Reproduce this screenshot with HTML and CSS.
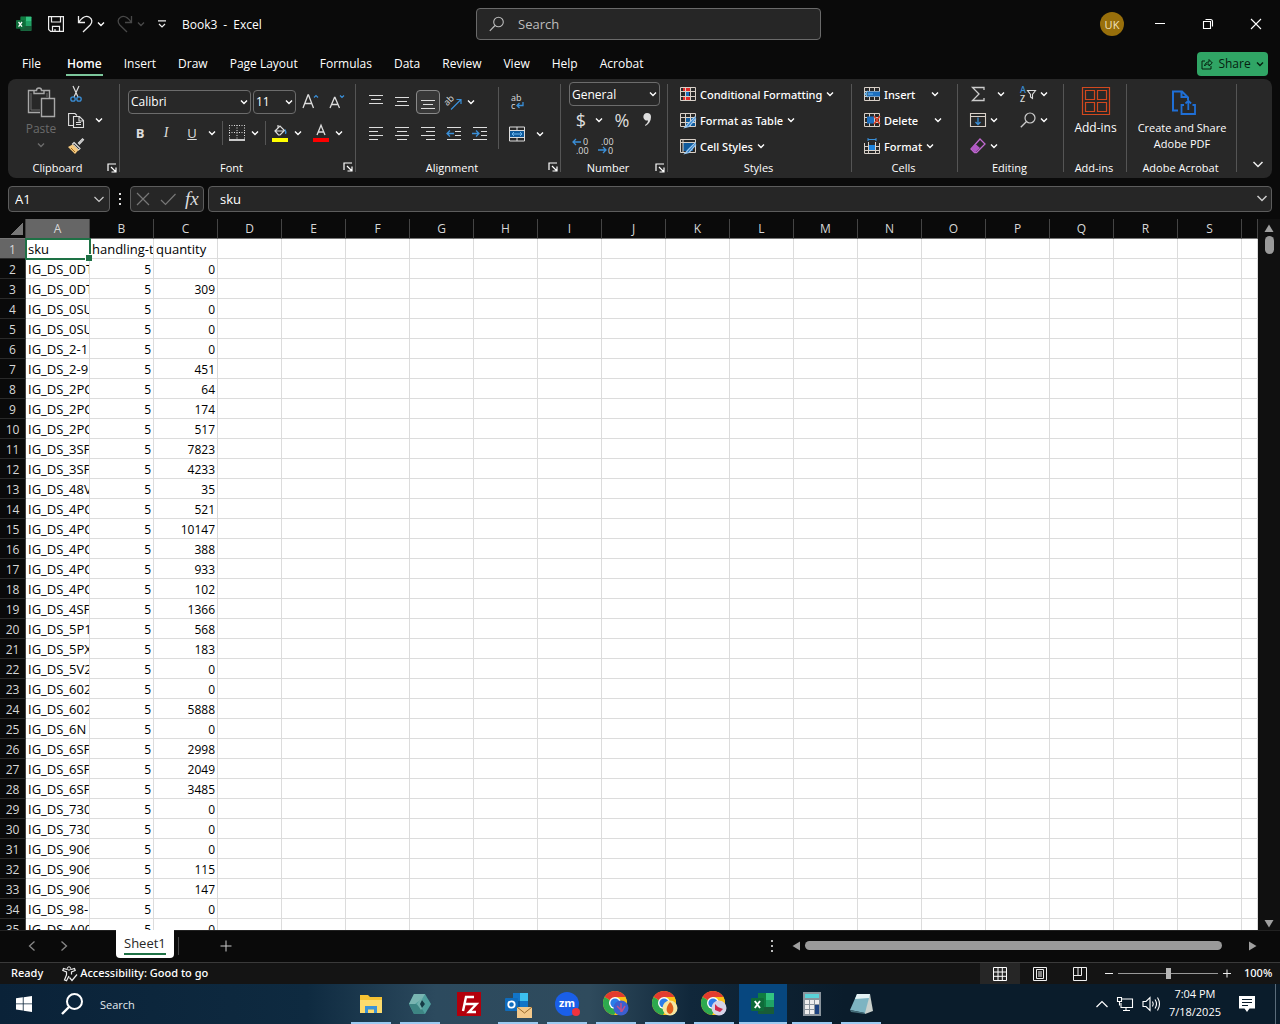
FILE: index.html
```
<!DOCTYPE html>
<html lang="en">
<head>
	<meta charset="UTF-8">
	<meta name="viewport" content="width=device-width, initial-scale=1.0">
	<title>Book3 - Excel</title>
	<link rel="stylesheet" href="styles.css">
</head>
<body>
	<svg class="defs" width="0" height="0" aria-hidden="true">
		<symbol id="chev" viewBox="0 0 8 8"><path d="M1 2.5 4 5.5 7 2.5" fill="none" stroke="currentColor" stroke-width="1.4"/></symbol>
		<symbol id="launch" viewBox="0 0 10 10"><path d="M1 8V1h8M4 4l4.5 4.5M9 4.5V9H4.5" fill="none" stroke="currentColor" stroke-width="1.2"/></symbol>
		<symbol id="excel" viewBox="0 0 24 24">
			<path d="M7 1h15a1 1 0 0 1 1 1v20H7z" fill="#21a366"/>
			<path d="M7 1h8v7H7z" fill="#107c41"/><path d="M15 1h8v7h-8z" fill="#33c481"/>
			<path d="M7 15h16v7H7z" fill="#185c37"/><path d="M15 8h8v7h-8z" fill="#21a366"/><path d="M7 8h8v7H7z" fill="#107c41"/>
			<rect x="0" y="6" width="13" height="13" rx="1" fill="#0f6b39"/>
			<path d="M3.8 9 9 16M9 9l-5.200 7" stroke="#fff" stroke-width="1.9" fill="none"/>
		</symbol>
		<symbol id="chrome" viewBox="0 0 28 28">
			<circle cx="13" cy="13" r="12" fill="#fbc116"/>
			<path d="M13 13 2.600 7A12 12 0 0 1 23.400 7z" fill="#e33b2e"/>
			<path d="M2.600 7A12 12 0 0 0 12 25l5-9z" fill="#2da94f"/>
			<path d="M13 7h10.400A12 12 0 0 1 12.500 25L18 15z" fill="#fbc116"/>
			<circle cx="13" cy="13" r="6" fill="#fff"/><circle cx="13" cy="13" r="4.600" fill="#2b7de9"/>
		</symbol>
		<symbol id="table" viewBox="0 0 16 16"><path d="M.5 1.500h15v13H.5zM.5 5.500h15M.5 10.500h15M5.500 1.500v13M10.500 1.500v13" fill="none" stroke="#d8d0c8"/></symbol>
	</svg>

	<header class="titlebar">
		<div class="quick">
			<svg class="i16" viewBox="0 0 24 24"><use href="#excel"/></svg>
			<button class="bare" aria-label="Save"><svg class="i16" viewBox="0 0 16 16"><path d="M.6.6h14.800v14.800H2.600l-2-2zM3.500.6v5.400h9V.6M4.500 15.400v-5h7v5M7 15v-2" fill="none" stroke="#eee" stroke-width="1.2"/></svg></button>
			<button class="bare undo" aria-label="Undo"><svg class="i16" viewBox="0 0 16 16"><path d="M1.500 0v6.500H8M1.800 6.200C5 1.500 9-.8 12.500 1.200c3 1.900 3 5.300.7 7.800L6 16" fill="none" stroke="#eee" stroke-width="1.3"/></svg><svg class="chev"><use href="#chev"/></svg></button>
			<button class="bare redo" aria-label="Redo" disabled><svg class="i16" viewBox="0 0 16 16"><path d="M14.500 0v6.500H8M14.200 6.200C11 1.500 7-.8 3.500 1.200.5 3.100.5 6.500 2.800 9L10 16" fill="none" stroke="currentColor" stroke-width="1.3"/></svg><svg class="chev"><use href="#chev"/></svg></button>
			<button class="bare customize" aria-label="Customize toolbar"><svg class="chev" viewBox="0 0 8 8"><path d="M0 .8h8M1 4l3 3 3-3" fill="none" stroke="#eee" stroke-width="1.2"/></svg></button>
			<span class="doc-name"><span>Book3</span><span>-</span><span>Excel</span></span>
		</div>
		<label class="searchbox">
			<svg class="i16" viewBox="0 0 16 16"><circle cx="9.500" cy="6" r="4.800" fill="none" stroke="#bbb" stroke-width="1.1"/><path d="M6 9.500.8 14.800" stroke="#bbb" stroke-width="1.2"/></svg>
			<input type="text" placeholder="Search" aria-label="Search">
		</label>
		<div class="window-buttons">
			<button class="avatar">UK</button>
			<button class="win" aria-label="Minimize"><svg class="i12" viewBox="0 0 12 12"><path d="M1 5.500h10" stroke="#fff"/></svg></button>
			<button class="win" aria-label="Restore"><svg class="i12" viewBox="0 0 12 12"><path d="M1.500 3.500h7v7h-7zM3.500 1.500h5a2 2 0 0 1 2 2v5" fill="none" stroke="#fff" stroke-width="1.1"/></svg></button>
			<button class="win" aria-label="Close"><svg class="i12" viewBox="0 0 12 12"><path d="M1 1l10 10M11 1 1 11" stroke="#fff" stroke-width="1.1"/></svg></button>
		</div>
	</header>

	<nav class="tabs">
		<a href="#" class="file">File</a>
		<a href="#" class="active">Home</a>
		<a href="#">Insert</a>
		<a href="#">Draw</a>
		<a href="#">Page Layout</a>
		<a href="#">Formulas</a>
		<a href="#">Data</a>
		<a href="#">Review</a>
		<a href="#">View</a>
		<a href="#">Help</a>
		<a href="#">Acrobat</a>
		<button class="share"><svg class="i12" viewBox="0 0 12 12"><path d="M4 3H1v8h9V8M3.500 8C4 5.500 5.500 4 8 4V1.500L11.300 5 8 8V6C6 6 4.500 6.500 3.500 8z" fill="none" stroke="currentColor"/></svg>Share<svg class="chev"><use href="#chev"/></svg></button>
	</nav>

	<section class="ribbon">
		<div class="group clipboard">
			<div class="tools">
				<button class="paste" disabled>
					<svg width="28" height="32" viewBox="0 0 28 32"><path d="M13 26.500H1.500v-22H7M17 4.500h5.500V12M7 7.500v-3h2.500a2.500 2.500 0 0 1 5 0H17v3zM14.500 12.500h13v18h-13z" fill="none" stroke="#a8a8a8" stroke-width="1.4"/><path d="M4 7v17h9M20 7v4" fill="none" stroke="#6a6a6a"/></svg>
					<span>Paste</span>
					<svg class="chev"><use href="#chev"/></svg>
				</button>
				<div class="rows">
					<div class="row"><button class="bare" aria-label="Cut"><svg class="i16" viewBox="0 0 16 16"><path d="M5 0l5 11M11 0 6 11" stroke="#ddd" fill="none" stroke-width="1.2"/><circle cx="5" cy="13" r="2.200" fill="none" stroke="#3a8fd8" stroke-width="1.3"/><circle cx="11" cy="13" r="2.200" fill="none" stroke="#3a8fd8" stroke-width="1.3"/></svg></button></div>
					<div class="row"><button class="bare copy" aria-label="Copy"><svg class="i16" viewBox="0 0 16 16"><path d="M5 13.500H.6V1.500H7l2 2M5.500 4.500h6l4 4v7h-10zM11 4.500v4.500h4.500M8 10.500h5M8 12.500h5" fill="none" stroke="#ddd" stroke-width="1.1"/></svg><svg class="chev"><use href="#chev"/></svg></button></div>
					<div class="row"><button class="bare" aria-label="Format painter"><svg class="i16" viewBox="0 0 16 16"><path d="M10 5.500 14.500.8l1 1L11 6.500M6 4.500l6 6-1.500 1.500-6-6z" fill="none" stroke="#ddd" stroke-width="1.2"/><path d="M4.500 6.500 0 9l7 7 3.500-4z" fill="#f3c77c"/><path d="M3 10l4 4" stroke="#a06a20"/></svg></button></div>
				</div>
			</div>
			<footer><span>Clipboard</span><button class="bare" aria-label="Clipboard settings"><svg class="launch"><use href="#launch"/></svg></button></footer>
		</div>

		<div class="group font">
			<div class="tools two">
				<div class="row">
					<label class="drop name"><select aria-label="Font"><option>Calibri</option></select><svg class="chev"><use href="#chev"/></svg></label>
					<label class="drop size"><select aria-label="Font size"><option>11</option></select><svg class="chev"><use href="#chev"/></svg></label>
					<button class="slot" aria-label="Grow font"><svg class="i16" viewBox="0 0 16 16"><path d="M0 14 5 1h.5l5 13M2 9.500h7" fill="none" stroke="#ddd" stroke-width="1.3"/><path d="M11 3.500 13 1.500l2 2" fill="none" stroke="#3a8fd8" stroke-width="1.200"/></svg></button>
					<button class="slot" aria-label="Shrink font"><svg class="i16" viewBox="0 0 16 16"><path d="M1 14 5.500 3.500h.5L10.500 14M3 10.500h6" fill="none" stroke="#ddd" stroke-width="1.3"/><path d="M11 1.500 13 3.500l2-2" fill="none" stroke="#3a8fd8" stroke-width="1.200"/></svg></button>
				</div>
				<div class="row style-row">
					<button class="slot"><b>B</b></button>
					<button class="slot"><i>I</i></button>
					<button class="slot"><u>U</u></button>
					<button class="more" aria-label="Underline options"><svg class="chev"><use href="#chev"/></svg></button>
					<span class="rule"></span>
					<button class="slot" aria-label="Borders"><svg class="i16" viewBox="0 0 16 16"><path d="M.5 0v14M15.500 0v14M8 0v14M0 .5h16M0 7.500h16" stroke="#ddd" stroke-dasharray="1 1.500" fill="none"/><path d="M0 15h16" stroke="#fff" stroke-width="1.500"/></svg></button>
					<button class="more" aria-label="Border options"><svg class="chev"><use href="#chev"/></svg></button>
					<span class="rule"></span>
					<button class="slot" aria-label="Fill color"><svg class="i16" viewBox="0 0 16 16"><path d="M6 0v4M3 6l5-5 4.500 4.500L8 10H6.500zM3 6h9" fill="none" stroke="#ddd" stroke-width="1.200"/><path d="M13 4.500c1 1.500 1 3 .5 4.500" stroke="#3a8fd8" fill="none" stroke-width="1.300"/><path d="M0 13h16v4H0z" fill="#ff0"/></svg></button>
					<button class="more" aria-label="Fill options"><svg class="chev"><use href="#chev"/></svg></button>
					<button class="slot" aria-label="Font color"><svg class="i16" viewBox="0 0 16 16"><path d="M4 10 8 .2 12 10M5.400 7h5.200" fill="none" stroke="#ddd" stroke-width="1.300"/><path d="M0 13h16v4H0z" fill="red"/></svg></button>
					<button class="more" aria-label="Font color options"><svg class="chev"><use href="#chev"/></svg></button>
				</div>
			</div>
			<footer><span>Font</span><button class="bare" aria-label="Font settings"><svg class="launch"><use href="#launch"/></svg></button></footer>
		</div>

		<div class="group alignment">
			<div class="tools">
				<div class="align-grid">
					<button class="slot" aria-label="Top align"><svg class="i16" viewBox="0 0 16 16"><path d="M1 1.500h14M3 5.500h10M1 9.500h14" stroke="#ddd" stroke-width="1.200"/></svg></button>
					<button class="slot" aria-label="Middle align"><svg class="i16" viewBox="0 0 16 16"><path d="M1 3.500h14M3 7.500h10M1 11.500h14" stroke="#ddd" stroke-width="1.200"/></svg></button>
					<button class="slot on" aria-label="Bottom align"><svg class="i16" viewBox="0 0 16 16"><path d="M1 6.500h14M3 10.500h10M1 14.500h14" stroke="#ddd" stroke-width="1.200"/></svg></button>
					<button class="slot" aria-label="Orientation"><svg class="i16" viewBox="0 0 16 16"><text x="-1" y="9" transform="rotate(-45 4 8)" class="tiny">ab</text><path d="M5 15.500 15 5.500M10.500 5.500H15V10" fill="none" stroke="#3a8fd8" stroke-width="1.200"/></svg></button>
					<button class="more" aria-label="Orientation options"><svg class="chev"><use href="#chev"/></svg></button>
					<button class="slot" aria-label="Align left"><svg class="i16" viewBox="0 0 16 16"><path d="M1 1.500h14M1 5.500h9M1 9.500h14M1 13.500h9" stroke="#ddd" stroke-width="1.200"/></svg></button>
					<button class="slot" aria-label="Center"><svg class="i16" viewBox="0 0 16 16"><path d="M1 1.500h14M3 5.500h10M1 9.500h14M3 13.500h10" stroke="#ddd" stroke-width="1.200"/></svg></button>
					<button class="slot" aria-label="Align right"><svg class="i16" viewBox="0 0 16 16"><path d="M1 1.500h14M6 5.500h9M1 9.500h14M6 13.500h9" stroke="#ddd" stroke-width="1.200"/></svg></button>
					<button class="slot" aria-label="Decrease indent"><svg class="i16" viewBox="0 0 16 16"><path d="M1 1.500h14M9 5.500h6M9 9.500h6M1 13.500h14" stroke="#ddd" stroke-width="1.200"/><path d="M8 7.500H1M4 4.500l-3 3 3 3" fill="none" stroke="#3a8fd8" stroke-width="1.300"/></svg></button>
					<button class="slot" aria-label="Increase indent"><svg class="i16" viewBox="0 0 16 16"><path d="M1 1.500h14M9 5.500h6M9 9.500h6M1 13.500h14" stroke="#ddd" stroke-width="1.200"/><path d="M0 7.500h7M4 4.500l3 3-3 3" fill="none" stroke="#3a8fd8" stroke-width="1.300"/></svg></button>
				</div>
				<span class="rule tall"></span>
				<div class="wrap-grid">
					<button class="slot" aria-label="Wrap text"><svg class="i16" viewBox="0 0 16 16"><text x="2" y="7" class="tiny">ab</text><text x="2" y="15" class="tiny">c</text><path d="M14 8v3.500H8M10.500 9 8 11.500l2.500 2.500" fill="none" stroke="#3a8fd8" stroke-width="1.300"/></svg></button>
					<span></span>
					<button class="slot" aria-label="Merge and center"><svg class="i16" viewBox="0 0 16 16"><path d="M1 4.500h14v7H1z" fill="#0f5a9c"/><path d="M.5 1h15v14H.5zM.5 4.500h15M.5 11.500h15M8 1v3.500M8 11.500V15" fill="none" stroke="#ddd"/><path d="M3 8h10M5 6 3 8l2 2M11 6l2 2-2 2" fill="none" stroke="#6cb8f0"/></svg></button>
					<button class="more" aria-label="Merge options"><svg class="chev"><use href="#chev"/></svg></button>
				</div>
			</div>
			<footer><span>Alignment</span><button class="bare" aria-label="Alignment settings"><svg class="launch"><use href="#launch"/></svg></button></footer>
		</div>

		<div class="group number">
			<div class="tools rows">
				<label class="drop format"><select aria-label="Number format"><option>General</option></select><svg class="chev"><use href="#chev"/></svg></label>
				<div class="row">
					<button class="slot sign">$</button>
					<button class="more" aria-label="Currency options"><svg class="chev"><use href="#chev"/></svg></button>
					<button class="slot sign">%</button>
					<button class="slot" aria-label="Comma style"><svg class="i16" viewBox="0 0 16 16"><path d="M9 1a4 4 0 0 1 4 4c0 4-2 7-5.500 9L7 13c2-1.500 3-3 3-4.500A3.800 3.800 0 1 1 9 1z" fill="#ddd"/></svg></button>
				</div>
				<div class="row">
					<button class="slot" aria-label="Increase decimal"><svg class="i16" viewBox="0 0 16 16"><text x="10" y="7" class="tiny">0</text><text x="3" y="16" class="tiny">.00</text><path d="M8 4H0M3 1 0 4l3 3" fill="none" stroke="#3a8fd8" stroke-width="1.300"/></svg></button>
					<button class="slot" aria-label="Decrease decimal"><svg class="i16" viewBox="0 0 16 16"><text x="4" y="7" class="tiny">.00</text><text x="11" y="16" class="tiny">0</text><path d="M1 12h8M6 9l3 3-3 3" fill="none" stroke="#3a8fd8" stroke-width="1.300"/></svg></button>
				</div>
			</div>
			<footer><span>Number</span><button class="bare" aria-label="Number settings"><svg class="launch"><use href="#launch"/></svg></button></footer>
		</div>

		<div class="group styles">
			<div class="tools rows">
				<div class="row"><button class="cmd"><svg class="i16" viewBox="0 0 16 16"><path d="M3 2h8v4H3zM3 10h8v4H3z" fill="#e02828"/><path d="M6 6h3v4H6z" fill="#1c6fc0"/><use href="#table"/></svg>Conditional Formatting<svg class="chev"><use href="#chev"/></svg></button></div>
				<div class="row"><button class="cmd"><svg class="i16" viewBox="0 0 16 16"><path d="M5 5h10v9H5z" fill="#0f5a9c"/><use href="#table"/><path d="M15.500 4.500 8 12l-3 3.500 4-1 7-8" fill="#1c6fc0" stroke="#9cc8ee" stroke-width="1.200"/></svg>Format as Table<svg class="chev"><use href="#chev"/></svg></button></div>
				<div class="row"><button class="cmd"><svg class="i16" viewBox="0 0 16 16"><path d="M3 5h10v8H3z" fill="#0f5a9c"/><path d="M.5 1.500h15v13H.5zM3 1.500v13M.5 4.500h15" fill="none" stroke="#d8d0c8"/><path d="M15.500 4.500 8 12l-3 3.500 4-1 7-8" fill="#1c6fc0" stroke="#9cc8ee" stroke-width="1.200"/></svg>Cell Styles<svg class="chev"><use href="#chev"/></svg></button></div>
			</div>
			<footer><span>Styles</span></footer>
		</div>

		<div class="group cells">
			<div class="tools rows">
				<div class="row"><button class="cmd wide"><svg class="i16" viewBox="0 0 16 16"><use href="#table"/><path d="M4 5.500h12v5H4z" fill="#1c6fc0"/><path d="M9 8H1M4 5 1 8l3 3" fill="none" stroke="#6cb8f0" stroke-width="1.200"/></svg>Insert<svg class="chev"><use href="#chev"/></svg></button></div>
				<div class="row"><button class="cmd wide"><svg class="i16" viewBox="0 0 16 16"><use href="#table"/><path d="M3 4.500h7v7H3z" fill="#1c6fc0"/><path d="M10 4l6 8M16 4l-6 8" stroke="#e0452c" stroke-width="1.500"/></svg>Delete<svg class="chev"><use href="#chev"/></svg></button></div>
				<div class="row"><button class="cmd"><svg class="i16" viewBox="0 0 16 16"><path d="M4 1.500h8M4 0v3M12 0v3" stroke="#3a8fd8" fill="none"/><path d="M.5 5v10.500h15V5M.5 8.500h15M.5 12.500h15M4.500 4v11.500M11.500 4v11.500" fill="none" stroke="#d8d0c8"/><path d="M5 7h6v5H5z" fill="#1c82dc"/></svg>Format<svg class="chev"><use href="#chev"/></svg></button></div>
			</div>
			<footer><span>Cells</span></footer>
		</div>

		<div class="group editing">
			<div class="tools edit-grid">
				<button class="cmd wide" aria-label="AutoSum"><svg class="i16" viewBox="0 0 16 16"><path d="M14 4V1.500H2.500L9 8l-6.500 6.500H14V12" fill="none" stroke="#ccc" stroke-width="1.300"/></svg><svg class="chev"><use href="#chev"/></svg></button>
				<button class="cmd" aria-label="Sort and filter"><svg class="i16" viewBox="0 0 16 16"><text x="0" y="7" class="tiny blue">A</text><text x="0" y="16" class="tiny">Z</text><path d="M7.500 4.500h8l-3 4v4l-2-1.500V8.500z" fill="none" stroke="#ddd" stroke-width="1.100"/></svg><svg class="chev"><use href="#chev"/></svg></button>
				<button class="cmd" aria-label="Fill"><svg class="i16" viewBox="0 0 16 16"><path d="M.5 1.500h15v13H.5zM.5 4.500h15" fill="none" stroke="#d8d0c8" stroke-width="1.100"/><path d="M8 5.500v7M5.500 10 8 12.500l2.500-2.500" fill="none" stroke="#3a8fd8" stroke-width="1.300"/></svg><svg class="chev"><use href="#chev"/></svg></button>
				<button class="cmd" aria-label="Find and select"><svg class="i16" viewBox="0 0 16 16"><circle cx="10" cy="6" r="5" fill="none" stroke="#ccc" stroke-width="1.200"/><path d="M6.500 9.500.8 15.200" stroke="#ccc" stroke-width="1.300"/></svg><svg class="chev"><use href="#chev"/></svg></button>
				<button class="cmd" aria-label="Clear"><svg class="i16" viewBox="0 0 16 16"><path d="M10 1 15 6 6.500 14.500H4.500L1 11z" fill="none" stroke="#c06ad0" stroke-width="1.300"/><path d="M5.500 6 1 10.500l4 4 5-4.500z" fill="#b058c4"/></svg><svg class="chev"><use href="#chev"/></svg></button>
			</div>
			<footer><span>Editing</span></footer>
		</div>

		<div class="group addins">
			<button class="big"><svg width="28" height="28" viewBox="0 0 28 28"><path d="M.5.5h27v27H.5zM3.500 3.500h9v9h-9zM15.500 3.500h9v9h-9zM3.500 15.500h9v9h-9zM15.500 15.500h9v9h-9z" fill="none" stroke="#d2481e" stroke-width="1.200"/></svg><span>Add-ins</span></button>
			<footer><span>Add-ins</span></footer>
		</div>

		<div class="group acrobat">
			<button class="big"><svg width="28" height="28" viewBox="0 0 28 28"><path d="M10 23.500H5V4.500h9l6 6V13M13.500 4.500V10H20" fill="none" stroke="#1f6fd6" stroke-width="2"/><path d="M16 18h-2.500v9H27v-9h-2.500M20.300 23v-9M17.500 16.500l2.800-2.800 2.800 2.800" fill="none" stroke="#1f6fd6" stroke-width="1.800"/></svg><span>Create and Share<br>Adobe PDF</span></button>
			<footer><span>Adobe Acrobat</span></footer>
		</div>
		<button class="bare collapse" aria-label="Collapse ribbon"><svg class="i12" viewBox="0 0 12 12"><path d="M1.500 4 6 8.500 10.500 4" fill="none" stroke="#eee" stroke-width="1.500"/></svg></button>
	</section>

	<div class="formula-bar">
		<label class="box name-box"><input type="text" value="A1" aria-label="Name box"><svg class="i12" viewBox="0 0 12 12"><path d="M1.500 4 6 8.500 10.500 4" fill="none" stroke="#ccc" stroke-width="1.200"/></svg></label>
		<svg class="dots" viewBox="0 0 4 14"><path d="M1 1h2v2H1zM1 6h2v2H1zM1 11h2v2H1z" fill="#ddd"/></svg>
		<div class="box fx">
			<button class="bare" aria-label="Cancel"><svg class="i16" viewBox="0 0 16 16"><path d="M2 2l12 12M14 2 2 14" stroke="#777" stroke-width="1.200"/></svg></button>
			<button class="bare" aria-label="Enter"><svg class="i16" viewBox="0 0 16 16"><path d="M1 9l4.500 4.500L15.500 3" fill="none" stroke="#777" stroke-width="1.200"/></svg></button>
			<button class="bare fn"><i>fx</i></button>
		</div>
		<label class="box formula"><input type="text" value="sku" aria-label="Formula"><svg class="i12" viewBox="0 0 12 12"><path d="M1.500 3 6 7.500 10.500 3" fill="none" stroke="#ccc" stroke-width="1.500"/></svg></label>
	</div>

	<main class="workspace">
		<div class="sheet">
			<table id="grid"></table>
		</div>
		<div class="vscroll">
			<svg class="arrow" viewBox="0 0 10 10"><path d="M5 1.500 9.500 9h-9z"/></svg>
			<div class="thumb"></div>
			<svg class="arrow" viewBox="0 0 10 10"><path d="M5 8.500.5 1h9z"/></svg>
		</div>
	</main>

	<div class="sheetbar">
		<button class="bare nav" aria-label="Previous sheet"><svg class="i12" viewBox="0 0 12 12"><path d="M8.500 1.500 3.500 6l5 4.500" fill="none" stroke="#888" stroke-width="1.300"/></svg></button>
		<button class="bare nav" aria-label="Next sheet"><svg class="i12" viewBox="0 0 12 12"><path d="M3.500 1.500 8.500 6l-5 4.500" fill="none" stroke="#888" stroke-width="1.300"/></svg></button>
		<button class="sheet-tab"><span>Sheet1</span></button>
		<button class="bare add" aria-label="New sheet"><svg class="i12" viewBox="0 0 12 12"><path d="M6 .5v11M.5 6h11" stroke="#ccc"/></svg></button>
		<svg class="dots" viewBox="0 0 4 14"><path d="M1 1h2v2H1zM1 6h2v2H1zM1 11h2v2H1z" fill="#bbb"/></svg>
		<div class="hscroll">
			<svg class="arrow" viewBox="0 0 10 10"><path d="M1.500 5 9 .5v9z"/></svg>
			<div class="track"><div class="thumb"></div></div>
			<svg class="arrow" viewBox="0 0 10 10"><path d="M8.500 5 1 .5v9z"/></svg>
		</div>
	</div>

	<footer class="statusbar">
		<span class="ready">Ready</span>
		<svg class="i16" viewBox="0 0 16 16"><circle cx="7" cy="2.500" r="1.700" fill="none" stroke="#eee"/><path d="M5 3.500 1.500 2.500.8 4.500 4.500 6v3L2.500 14l2 .8L7 10M9 3.500l3.500-1 .7 2L9.500 6v2.500M7.500 11.500l2.500 3 5-6" fill="none" stroke="#eee" stroke-width="1.200"/></svg>
		<span class="access">Accessibility: Good to go</span>
		<button class="view on" aria-label="Normal view"><svg class="i14" viewBox="0 0 14 14"><path d="M.5.5h13v13H.5zM.5 5h13M.5 9.300h13M5 .5v13M9.300.5v13" fill="none" stroke="#fff"/></svg></button>
		<button class="view" aria-label="Page layout view"><svg class="i14" viewBox="0 0 14 14"><path d="M.5.5h13v13H.5zM3.500 2.500h7v9h-7zM5 5h4M5 7h4M5 9h4" fill="none" stroke="#eee"/></svg></button>
		<button class="view" aria-label="Page break view"><svg class="i14" viewBox="0 0 14 14"><path d="M.5.5h13v13H.5zM.5 8.500h8v-8M5 .5v8" fill="none" stroke="#eee"/></svg></button>
		<button class="bare step" aria-label="Zoom out"><svg class="i10" viewBox="0 0 10 10"><path d="M1 4.500h8" stroke="#eee"/></svg></button>
		<input type="range" class="zoom" min="0" max="100" value="50" aria-label="Zoom">
		<button class="bare step" aria-label="Zoom in"><svg class="i10" viewBox="0 0 10 10"><path d="M1 4.500h8M5 .5v8" stroke="#eee"/></svg></button>
		<span class="percent">100%</span>
	</footer>

	<div class="taskbar">
		<button class="start" aria-label="Start"><svg class="i16" viewBox="0 0 16 16"><path d="M0 2.300 6.800 1.300v6.200H0zM7.600 1.200 16 0v7.500H7.600zM0 8.300h6.800v6.300L0 13.600zM7.600 8.300H16V16l-8.400-1.200z" fill="#fff"/></svg></button>
		<button class="find"><svg width="24" height="24" viewBox="0 0 24 24"><circle cx="14.500" cy="9.500" r="7.500" fill="none" stroke="#fff" stroke-width="2"/><path d="M9 15 2 22" stroke="#fff" stroke-width="2.400"/></svg>Search</button>
		<div class="apps">
			<button class="app open" aria-label="File Explorer"><svg width="24" height="24" viewBox="0 0 24 24"><path d="M1 3h8l2 2h12v16H1z" fill="#f5c233"/><path d="M1 8h22v13H1z" fill="#fddb6d"/><path d="M6 14h12v7h-3v-3.500H9V21H6z" fill="#3c93d8"/></svg></button>
			<button class="app open" aria-label="Hexagon app"><svg width="24" height="24" viewBox="0 0 24 24"><path d="M6 2h11l6 10-6 10H6L1 12z" fill="#4f9f9d"/><path d="M6 2h11l-3 5-7 5H1z" fill="#79b5b1"/><path d="M17 22H6L1 12h7l6 5z" fill="#3d8583"/><path d="M13 6l4 6-4 6-4-6z" fill="#6fb0ac"/><path d="M14 8l3 4-3 4-2-4z" fill="#153a45"/></svg></button>
			<button class="app" aria-label="FileZilla"><svg width="24" height="24" viewBox="0 0 24 24"><path d="M0 0h24v24H0z" fill="#b3000c"/><path d="M6 19 9 5h8M7.500 12h6M12.500 12h7l-7.500 8h7" fill="none" stroke="#fff" stroke-width="2.400"/></svg></button>
			<button class="app open" aria-label="Outlook"><svg width="28" height="28" viewBox="0 0 28 28"><path d="M9 3h15v16H9z" fill="#1275c8"/><path d="M16 3h8v8h-8z" fill="#3cc0f0"/><path d="M9 11h7v8H9z" fill="#0a5aa0"/><rect x="1" y="8" width="13" height="13" rx="1" fill="#0f6cbd"/><circle cx="7.500" cy="14.500" r="3.200" fill="none" stroke="#fff" stroke-width="1.800"/><path d="M13 17h15v11H13z" fill="#f3c98b"/><path d="M13 17l7.500 6 7.500-6" fill="none" stroke="#9a6a2c"/></svg></button>
			<button class="app open" aria-label="Zoom"><svg width="24" height="24" viewBox="0 0 24 24"><circle cx="12" cy="12" r="12" fill="#1a5fe8"/><text x="12" y="15" text-anchor="middle" class="zm">zm</text><circle cx="21" cy="20" r="4" fill="#f0323c"/></svg></button>
			<button class="app open" aria-label="Chrome"><svg width="28" height="28" viewBox="0 0 28 28"><use href="#chrome"/><circle cx="19" cy="18" r="7.500" fill="#3b5fd0"/><path d="M15 16l5 5 3-5M19 13v9" stroke="#c0508a" stroke-width="1.500" fill="none"/></svg></button>
			<button class="app open" aria-label="Chrome"><svg width="28" height="28" viewBox="0 0 28 28"><use href="#chrome"/><circle cx="19" cy="18" r="7.500" fill="#f6e7a0"/><path d="M19 12c5 4 4 11 0 12-4-1-5-6 0-12z" fill="#e0601c"/></svg></button>
			<button class="app open" aria-label="Chrome"><svg width="28" height="28" viewBox="0 0 28 28"><use href="#chrome"/><circle cx="19" cy="18" r="7.500" fill="#d5d3e6"/><path d="M15 14l3 3 5 2-3 3-5-2z" fill="#d02a4a"/></svg></button>
			<button class="app open active" aria-label="Excel"><svg width="24" height="24" viewBox="0 0 24 24"><use href="#excel"/></svg></button>
			<button class="app open" aria-label="Calculator"><svg width="24" height="24" viewBox="0 0 24 24"><path d="M3 0h18v24H3z" fill="#8a949c"/><path d="M5 2h14v4H5z" fill="#5ad2d8"/><path d="M5 8h4v4H5zM10 8h4v4h-4zM15 8h4v4h-4zM5 13h4v4H5zM10 13h4v4h-4zM5 18h4v4H5zM10 18h4v4h-4z" fill="#eee"/><path d="M15 13h4v9h-4z" fill="#1d4382"/></svg></button>
			<button class="app open" aria-label="Notepad"><svg width="24" height="24" viewBox="0 0 24 24"><path d="M8 2h13l3 17-8 3z" fill="#c9d0cc"/><path d="M8 2h13l-5 19-15-3z" fill="#7db4c2"/><path d="M8 2h13l-1 4L6 7z" fill="#e4f2f4"/><path d="M1 18l15 3v1L2 20z" fill="#47707c"/></svg></button>
		</div>
		<div class="tray">
			<svg class="i12" viewBox="0 0 12 12"><path d="M.5 9 6 3.500 11.500 9" fill="none" stroke="#fff" stroke-width="1.200"/></svg>
			<svg class="i16" viewBox="0 0 16 16"><path d="M5 3h10.500v8.500H4V7M9 11.500V14M6 14.500h7M.5 1.500h4v4h-4zM2.500 5.500v4" fill="none" stroke="#fff" stroke-width="1.100"/></svg>
			<svg class="i18" viewBox="0 0 18 18"><path d="M1 6.500h3l4-4v13l-4-4H1zM10.500 6.500q1.500 2.500 0 5M13 4.500q3 4.500 0 9M15.500 2.500q4 6.500 0 13" fill="none" stroke="#fff" stroke-width="1.100"/></svg>
			<time class="clock"><span>7:04 PM</span><span>7/18/2025</span></time>
			<svg class="i16 note" viewBox="0 0 16 16"><path d="M0 0h16v12.500H10.500L8 16l-2.500-3.500H0z" fill="#fff"/><path d="M3 3.500h10M3 6.500h10M3 9.500h6" stroke="#0a1c2b"/></svg>
			<span class="peek"></span>
		</div>
	</div>
	<script src="script.js"></script>
</body>
</html>
```
FILE: styles.css
```
* {
	box-sizing: border-box;
}
body {
	margin: 0;
	height: 100vh;
	display: flex;
	flex-direction: column;
	overflow: hidden;
	background: #0a0a0a;
	color: #fff;
	font-family: "Open Sans", "Noto Sans", sans-serif;
	font-size: 12px;
}
button, input, select {
	font: inherit;
	color: inherit;
	background: none;
	border: 0;
	padding: 0;
	margin: 0;
	outline: none;
}
svg {
	display: block;
	flex: none;
	overflow: visible;
}
.defs {
	position: absolute;
}
.i10 { width: 10px; height: 10px; }
.i12 { width: 12px; height: 12px; }
.i14 { width: 14px; height: 14px; }
.i16 { width: 16px; height: 16px; }
.i18 { width: 18px; height: 18px; }
.chev { width: 8px; height: 8px; }
.launch { width: 10px; height: 10px; }
.dots { width: 4px; height: 14px; }
.tiny {
	font-size: 9px;
	fill: #ddd;
}
.blue {
	fill: #3a8fd8;
}
.bare {
	display: flex;
	align-items: center;
}

/* title bar */
.titlebar {
	height: 48px;
	flex: none;
	display: grid;
	grid-template-columns: 476fr 345fr 459fr;
	align-items: center;
}
.quick {
	display: flex;
	align-items: center;
	padding-left: 16px;
	gap: 16px;
}
.undo, .redo {
	gap: 4px;
	margin-left: -3px;
}
.redo {
	color: #484848;
	margin-left: -4px;
	margin-right: -3px;
}
.doc-name {
	display: flex;
	gap: 6px;
}
.searchbox {
	height: 32px;
	display: flex;
	align-items: center;
	gap: 13px;
	padding: 0 12px;
	border: 1px solid #6a6a6a;
	border-radius: 4px;
	background: #262626;
}
.searchbox input {
	flex: 1;
	font-size: 13px;
}
.searchbox input::placeholder {
	color: #bdbdbd;
	opacity: 1;
}
.window-buttons {
	display: flex;
	justify-content: flex-end;
	align-items: center;
}
.avatar {
	width: 24px;
	height: 24px;
	margin-right: 12px;
	border-radius: 50%;
	background: #986f0b;
	color: #f3e3bd;
	font-size: 11px;
}
.win {
	width: 48px;
	height: 48px;
	display: flex;
	align-items: center;
	justify-content: center;
}

/* tabs */
.tabs {
	height: 31px;
	flex: none;
	display: flex;
	align-items: center;
	padding: 0 12px 0 11px;
}
.tabs a {
	color: #fff;
	text-decoration: none;
	padding: 0 11px;
	line-height: 24px;
	white-space: nowrap;
}
.tabs .file {
	margin-right: 4px;
}
.tabs .active {
	font-weight: 600;
	background: linear-gradient(#7cc79c, #7cc79c) bottom / calc(100% - 20px) 2px no-repeat;
}
.share {
	width: 71px;
	height: 24px;
	margin-left: auto;
	display: flex;
	align-items: center;
	justify-content: center;
	gap: 5px;
	border-radius: 4px;
	background: #30a565;
	color: #06210f;
}

/* ribbon */
.ribbon {
	height: 99px;
	flex: none;
	margin: 0 8px;
	display: flex;
	border-radius: 8px;
	background: #282828;
}
.group {
	flex: none;
	display: flex;
	flex-direction: column;
	padding: 2px 0;
	background: linear-gradient(#555, #555) right 5px / 1px 88px no-repeat;
}
.group .tools {
	flex: 1;
	display: flex;
}
.group > footer {
	height: 18px;
	display: flex;
	align-items: center;
	padding-right: 3px;
	font-size: 11px;
	font-weight: 500;
}
.group > footer span {
	flex: 1;
	text-align: center;
}
.clipboard { width: 112px; }
.font { width: 236px; }
.alignment { width: 205px; }
.number { width: 107px; }
.styles { width: 184px; }
.cells { width: 106px; }
.editing { width: 106px; }
.addins { width: 63px; }
.acrobat { width: 110px; }
.row {
	height: 26px;
	display: flex;
	align-items: center;
}
.group .rows {
	flex-direction: column;
}
.paste {
	width: 50px;
	margin-left: 8px;
	margin-right: 2px;
	padding-top: 5px;
	display: flex;
	flex-direction: column;
	align-items: center;
	color: #6b6b6b;
}
.paste span {
	padding-top: 2px;
}
.paste .chev {
	margin-top: 4px;
}
.copy {
	gap: 11px;
}
.group .two {
	flex-direction: column;
	padding: 5px 0 0 7px;
}
.two .row {
	height: 32px;
}
.two .row:first-child {
	height: 31px;
}
.slot {
	flex: none;
	width: 26px;
	height: 24px;
	display: flex;
	align-items: center;
	justify-content: center;
	font-size: 13px;
	color: #ddd;
}
.slot i {
	font-family: "Liberation Serif", serif;
	font-size: 14px;
}
.more {
	flex: none;
	width: 12px;
	height: 24px;
	display: flex;
	align-items: center;
	justify-content: center;
}
.on {
	border: 1px solid #8a8a8a;
	border-radius: 4px;
	background: #383838;
}
.rule {
	width: 1px;
	height: 24px;
	margin: 0 3px;
	background: #555;
}
.rule.tall {
	height: 62px;
	margin: 6px 5px;
}
.style-row .more {
	width: 14px;
}
.style-row .slot:nth-of-type(n+4) {
	width: 22px;
}
.style-row .slot:nth-last-child(2) {
	margin-left: 5px;
}
.drop {
	height: 24px;
	display: flex;
	align-items: center;
	padding: 0 2px;
	border: 1px solid #6c6c6c;
	border-radius: 4px;
}
.drop select {
	flex: 1;
	min-width: 0;
	appearance: none;
}
.name { width: 123px; margin-left: 1px; }
.size { width: 43px; margin: 0 2px; }
.format { width: 91px; }
.align-grid, .wrap-grid {
	display: grid;
	grid-auto-rows: 32px;
	align-content: start;
	align-items: center;
	padding-top: 5px;
}
.align-grid {
	grid-template-columns: repeat(5, 26px);
	margin-left: 7px;
}
.wrap-grid {
	grid-template-columns: 26px 20px;
}
.align-grid .more {
	width: 8px;
}
.wrap-grid .more {
	width: 20px;
}
.align-grid .on {
	width: 24px;
	margin: 0 1px;
}
.number .rows {
	padding-left: 8px;
}
.number .format {
	margin: 1px 0;
}
.number .slot {
	width: 24px;
}
.number .row .more {
	margin-right: 5px;
}
.group .sign {
	font-size: 18px;
}
.styles .rows, .cells .rows {
	padding-left: 12px;
}
.cmd {
	display: flex;
	align-items: center;
	gap: 4px;
	white-space: nowrap;
	font-family: "Noto Sans", sans-serif;
	font-size: 11px;
	font-weight: 500;
}
.cmd.wide .chev {
	margin-left: 12px;
}
.group .edit-grid {
	display: grid;
	grid-template-columns: 50px 40px;
	grid-auto-rows: 26px;
	padding-left: 12px;
}
.edit-grid .wide .chev {
	margin-left: 7px;
}
.big {
	flex: 1;
	display: flex;
	flex-direction: column;
	align-items: center;
	padding-top: 6px;
	line-height: 16px;
	white-space: nowrap;
}
.big svg {
	margin-bottom: 5px;
}
.acrobat .big {
	font-size: 11px;
	font-weight: 500;
}
.collapse {
	margin: auto 0 8px auto;
	padding-right: 8px;
}

/* formula bar */
.formula-bar {
	height: 41px;
	flex: none;
	display: flex;
	align-items: center;
	padding: 0 8px;
}
.box {
	height: 26px;
	display: flex;
	align-items: center;
	border: 1px solid #5c5c5c;
	border-radius: 4px;
	background: #262626;
}
.box input {
	flex: 1;
	min-width: 0;
	font-size: 13px;
}
.name-box {
	width: 102px;
	padding: 0 4px 0 6px;
}
.formula-bar .dots {
	margin: 0 8px;
}
.fx {
	width: 74px;
	justify-content: space-around;
	margin-right: 4px;
}
.fn {
	font-family: "Liberation Serif", serif;
	font-size: 19px;
	color: #ddd;
}
.formula {
	flex: 1;
	padding: 0 3px 0 11px;
}

/* sheet */
.workspace {
	flex: 1;
	min-height: 0;
	display: flex;
}
.sheet {
	flex: 1;
	min-width: 0;
	overflow: hidden;
	background: #fff;
}
table {
	width: 100%;
	table-layout: fixed;
	border-collapse: separate;
	border-spacing: 0;
}
.num-col { width: 26px; }
.data-col { width: 64px; }
th {
	height: 20px;
	padding: 0;
	background: #0a0a0a;
	color: #d8d8d8;
	font-weight: normal;
	font-size: 12px;
	line-height: 19px;
	border-right: 1px solid #444;
	border-bottom: 1px solid #2a2a2a;
}
thead th {
	border-bottom-color: #777;
}
tbody th {
	padding-top: 2px;
	line-height: 17px;
}
th.picked {
	background: #666;
}
.corner {
	background: linear-gradient(135deg, #0a0a0a 50%, #777 50%) 10px 4px / 13px 12px no-repeat #0a0a0a;
}
td {
	height: 20px;
	padding: 2px 2px 0;
	color: #000;
	font-size: 13px;
	line-height: 17px;
	white-space: nowrap;
	overflow: hidden;
	border-right: 1px solid #dcdcdc;
	border-bottom: 1px solid #dcdcdc;
}
td.value {
	font-size: 12px;
	text-align: right;
}
td.cursor {
	position: relative;
	overflow: visible;
	outline: 2px solid #1e7145;
	outline-offset: -1px;
}
td.cursor::after {
	content: "";
	position: absolute;
	right: -3px;
	bottom: -3px;
	width: 6px;
	height: 6px;
	background: #1e7145;
	border: 1px solid #fff;
	border-width: 1px 0 0 1px;
}
.vscroll {
	width: 22px;
	display: flex;
	flex-direction: column;
	align-items: center;
	padding: 4px 0 1px;
	background: #101010;
}
.arrow {
	width: 10px;
	height: 10px;
	fill: #a0a0a0;
}
.thumb {
	border-radius: 5px;
	background: #9a9a9a;
}
.vscroll .thumb {
	width: 9px;
	height: 18px;
	margin: 3px 0 auto;
}

/* sheet tabs */
.sheetbar {
	height: 32px;
	flex: none;
	display: flex;
	align-items: center;
	padding: 0 22px 2px 16px;
	border-top: 1px solid #222;
}
.nav {
	width: 32px;
	justify-content: center;
}
.sheet-tab {
	align-self: flex-start;
	height: 28px;
	margin: -1px 4px 0 36px;
	padding: 0 8px;
	border-radius: 0 0 4px 4px;
	background: #fff;
	color: #262626;
	font-size: 13px;
	font-weight: 500;
}
.sheet-tab span {
	display: block;
	line-height: 20px;
	border-bottom: 2px solid #1e7145;
}
.add {
	padding-left: 42px;
	background: linear-gradient(#444, #444) left / 1px 18px no-repeat;
	height: 20px;
}
.sheetbar > .dots {
	margin: 0 17px 0 auto;
}
.hscroll {
	width: 37.6%;
	display: flex;
	align-items: center;
	gap: 4px;
}
.track {
	flex: 1;
}
.hscroll .thumb {
	width: 95%;
	height: 9px;
}

/* status bar */
.statusbar {
	height: 22px;
	flex: none;
	display: flex;
	align-items: center;
	padding: 0 8px 0 11px;
	border-top: 1px solid #3a3a3a;
	background: #141414;
	font-family: "Noto Sans", sans-serif;
	font-size: 11px;
	font-weight: 500;
	line-height: 14px;
}
.ready {
	margin-right: 19px;
}
.access {
	margin: 0 auto 0 2px;
}
.statusbar span {
	padding-bottom: 2px;
}
.view {
	width: 40px;
	height: 21px;
	display: flex;
	align-items: center;
	justify-content: center;
}
.view.on {
	border: 0;
	border-radius: 0;
	background: #262626;
}
.step {
	margin: 0 4px;
}
.zoom {
	width: 100px;
	height: 12px;
	appearance: none;
	background: linear-gradient(#999, #999) center / 100% 1px no-repeat;
}
.zoom::-webkit-slider-thumb {
	appearance: none;
	width: 5px;
	height: 11px;
	background: #b5b5b5;
}
.percent {
	width: 28px;
	margin-left: 8px;
}

/* taskbar */
.taskbar {
	height: 40px;
	flex: none;
	display: flex;
	background: linear-gradient(90deg, #0a2238, #0e2a40 24%, #2c4a5e 34%, #2f4b5d 46%, #10273a 54%, #0a1c2b 66%, #0a1c2b);
}
.start {
	width: 48px;
	display: flex;
	align-items: center;
	justify-content: center;
}
.find {
	flex: 287;
	display: flex;
	align-items: center;
	gap: 16px;
	padding-left: 12px;
	color: #e4ebf0;
	font-size: 11px;
}
.apps {
	display: flex;
	gap: 1px;
}
.app {
	width: 48px;
	display: flex;
	align-items: center;
	justify-content: center;
}
.app.open {
	background: linear-gradient(#9ccbf2, #9ccbf2) bottom / 40px 2px no-repeat;
}
.app.active {
	background: linear-gradient(#9ccbf2, #9ccbf2) bottom / 100% 2px no-repeat #07477f;
}
.zm {
	font-size: 11px;
	font-weight: bold;
	fill: #fff;
}
.tray {
	flex: 395;
	display: flex;
	align-items: center;
	justify-content: flex-end;
	gap: 9px;
}
.clock {
	display: flex;
	flex-direction: column;
	text-align: center;
	line-height: 18px;
	padding-bottom: 2px;
	font-size: 11px;
}
.note {
	margin: 0 11px 0 9px;
}
.peek {
	width: 5px;
	height: 40px;
	border-left: 1px solid #5a6c7a;
}
```
FILE: script.js
```
const columns = 'ABCDEFGHIJKLMNOPQRS'.split('');
const rows = [
	['sku', 'handling-time', 'quantity'],
	['IG_DS_0DT', 5, 0], ['IG_DS_0DT', 5, 309], ['IG_DS_0SU', 5, 0], ['IG_DS_0SU', 5, 0],
	['IG_DS_2-1', 5, 0], ['IG_DS_2-9', 5, 451], ['IG_DS_2PC', 5, 64], ['IG_DS_2PC', 5, 174],
	['IG_DS_2PC', 5, 517], ['IG_DS_3SP', 5, 7823], ['IG_DS_3SP', 5, 4233], ['IG_DS_48V', 5, 35],
	['IG_DS_4PC', 5, 521], ['IG_DS_4PC', 5, 10147], ['IG_DS_4PC', 5, 388], ['IG_DS_4PC', 5, 933],
	['IG_DS_4PC', 5, 102], ['IG_DS_4SP', 5, 1366], ['IG_DS_5P1', 5, 568], ['IG_DS_5PX', 5, 183],
	['IG_DS_5V2', 5, 0], ['IG_DS_602', 5, 0], ['IG_DS_602', 5, 5888], ['IG_DS_6N', 5, 0],
	['IG_DS_6SP', 5, 2998], ['IG_DS_6SP', 5, 2049], ['IG_DS_6SP', 5, 3485], ['IG_DS_730', 5, 0],
	['IG_DS_730', 5, 0], ['IG_DS_906', 5, 0], ['IG_DS_906', 5, 115], ['IG_DS_906', 5, 147],
	['IG_DS_98-', 5, 0], ['IG_DS_A00', 5, 0]
];

let html = '<colgroup><col class="num-col">' + columns.map(() => '<col class="data-col">').join('') + '<col></colgroup>';
html += '<thead><tr><th class="corner"></th>';
html += columns.map((c, i) => `<th class="${i === 0 ? 'picked' : ''}">${c}</th>`).join('') + '<th></th></tr></thead><tbody>';
rows.forEach((row, r) => {
	html += `<tr><th class="${r === 0 ? 'picked' : ''}">${r + 1}</th>`;
	for (let c = 0; c <= columns.length; c++) {
		const value = row[c] === undefined ? '' : row[c];
		const cls = r === 0 && c === 0 ? 'cursor' : typeof value === 'number' ? 'value' : '';
		html += `<td class="${cls}">${value}</td>`;
	}
	html += '</tr>';
});
document.querySelector('#grid').innerHTML = html + '</tbody>';
```
